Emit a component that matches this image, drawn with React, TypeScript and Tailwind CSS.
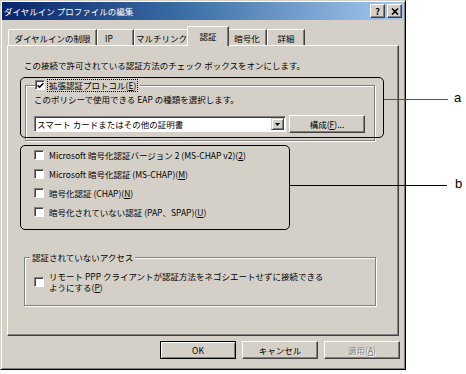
import { ReactNode } from "react";

const Check = ({ checked }: { checked?: boolean }) => (
  <span className="box-border flex h-[10px] w-[10px] shrink-0 items-center justify-center border border-t-[#808080] border-l-[#808080] border-r-white border-b-white bg-white shadow-[inset_1px_1px_#404040]">
    {checked && (
      <svg width="7" height="7" viewBox="0 0 7 7">
        <path d="M0.6 3.2 L2.6 5.2 L6.4 1.2" stroke="#000" strokeWidth="1.6" fill="none" />
      </svg>
    )}
  </span>
);

const Button = ({ children, def, disabled }: { children: ReactNode; def?: boolean; disabled?: boolean }) => (
  <div
    className={
      def
        ? "box-border flex h-[18px] w-[76px] items-center justify-center border border-black shadow-[inset_1px_1px_#fff,inset_-1px_-1px_#808080]"
        : "box-border flex h-[18px] w-[76px] items-center justify-center border border-t-white border-l-white border-r-[#404040] border-b-[#404040] shadow-[inset_-1px_-1px_#808080]"
    }
  >
    <span className={disabled ? "text-[#808080] [text-shadow:1px_1px_#fff]" : ""}>{children}</span>
  </div>
);

const Tab = ({ label, className }: { label: string; className: string }) => (
  <div
    className={`box-border flex h-[16px] items-start justify-center rounded-tl-[2px] border-t border-l border-r border-t-white border-l-white border-r-[#404040] pt-[2px] shadow-[inset_-1px_0_#808080] ${className}`}
  >
    {label}
  </div>
);

const Row = ({ children }: { children: ReactNode }) => (
  <div className="ml-[26px] flex h-[19px] items-center gap-[5px]">
    <Check />
    <span>{children}</span>
  </div>
);

export default function App() {
  return (
    <div className="relative h-[374px] w-[466px] overflow-hidden bg-white font-['Noto_Sans_CJK_JP','Noto_Sans',sans-serif] text-[8.5px] leading-[12px] text-black">
      <div className="box-border flex h-[370px] w-[406px] flex-col border border-t-[#d4d0c8] border-l-[#d4d0c8] border-r-black border-b-black bg-[#d4d0c8] p-[1px] shadow-[inset_1px_1px_#fff,inset_-1px_-1px_#808080]">
        {/* title bar */}
        <div className="flex h-[18px] items-center bg-[linear-gradient(to_right,#0a246a,#3a6ea5_45%,#a6caf0)] pl-[2px] pr-[2px] text-white">
          <span className="text-[8.5px]">ダイヤルイン プロファイルの編集</span>
          <div className="ml-auto flex gap-[2px]">
            <div className="box-border flex h-[14px] w-[15px] items-center justify-center border border-t-white border-l-white border-r-[#404040] border-b-[#404040] bg-[#d4d0c8] text-[9px] font-bold leading-none text-black shadow-[inset_-1px_-1px_#808080]">
              ?
            </div>
            <div className="box-border flex h-[14px] w-[15px] items-center justify-center border border-t-white border-l-white border-r-[#404040] border-b-[#404040] bg-[#d4d0c8] shadow-[inset_-1px_-1px_#808080]">
              <svg width="8" height="7" viewBox="0 0 8 7">
                <path d="M1 0.5 L7 6.5 M7 0.5 L1 6.5" stroke="#000" strokeWidth="1.6" />
              </svg>
            </div>
          </div>
        </div>

        {/* tabs */}
        <div className="ml-[5px] mt-[6px] flex h-[19px] items-end pl-[1px]">
          <Tab label="ダイヤルインの制限" className="w-[89px]" />
          <Tab label="IP" className="w-[37px] justify-start pl-[7px]" />
          <Tab label="マルチリンク" className="w-[55px]" />
          <div className="relative z-10 -mx-[2px] -mb-[1px] box-border flex h-[20px] w-[42px] items-start justify-center rounded-tl-[2px] border-t border-l border-r border-t-white border-l-white border-r-[#404040] bg-[#d4d0c8] pt-[3px] shadow-[inset_-1px_0_#808080]">
            認証
          </div>
          <Tab label="暗号化" className="w-[40px]" />
          <Tab label="詳細" className="w-[38px]" />
        </div>

        {/* panel */}
        <div className="ml-[5px] box-border flex h-[291px] w-[392px] flex-col border border-t-white border-l-white border-r-[#404040] border-b-[#404040] shadow-[inset_-1px_-1px_#808080]">
          <div className="ml-[16px] mt-[13px] h-[12px]">この接続で許可されている認証方法のチェック ボックスをオンにします。</div>

          {/* EAP group */}
          <div className="ml-[17px] mt-[14px] box-border flex h-[56px] w-[350px] flex-col border border-[#808080] shadow-[inset_1px_1px_#fff,1px_1px_#fff]">
            <div className="-mt-[7px] ml-[9px] flex h-[12px] w-fit items-center gap-[2px] bg-[#d4d0c8] pr-[2px]">
              <Check checked />
              <span className="box-border flex h-[13px] items-center border border-dotted border-black px-[1px]">
                拡張認証プロトコル(<u>E</u>)
              </span>
            </div>
            <div className="ml-[8px] mt-[2px] h-[12px]">このポリシーで使用できる EAP の種類を選択します。</div>
            <div className="ml-[8px] mt-[10px] flex items-center gap-[3px]">
              <div className="box-border flex h-[16px] w-[252px] items-center border border-t-[#808080] border-l-[#808080] border-r-white border-b-white bg-white shadow-[inset_1px_1px_#404040] pl-[2px] pr-[1px]">
                <span>スマート カードまたはその他の証明書</span>
                <div className="ml-auto box-border flex h-[12px] w-[13px] items-center justify-center border border-t-[#d4d0c8] border-l-[#d4d0c8] border-r-[#404040] border-b-[#404040] bg-[#d4d0c8] shadow-[inset_1px_1px_#fff,inset_-1px_-1px_#808080]">
                  <svg width="5" height="3" viewBox="0 0 5 3">
                    <path d="M0 0 H5 L2.5 3 Z" fill="#000" />
                  </svg>
                </div>
              </div>
              <Button>
                構成(<u>F</u>)...
              </Button>
            </div>
          </div>

          {/* methods */}
          <div className="mt-[4px] flex flex-col">
            <Row>
              Microsoft 暗号化認証バージョン 2 (MS-CHAP v2)(<u>2</u>)
            </Row>
            <Row>
              Microsoft 暗号化認証 (MS-CHAP)(<u>M</u>)
            </Row>
            <Row>
              暗号化認証 (CHAP)(<u>N</u>)
            </Row>
            <Row>
              暗号化されていない認証 (PAP、SPAP)(<u>U</u>)
            </Row>
          </div>

          {/* unauthenticated access */}
          <div className="ml-[16px] mt-[36px] box-border flex h-[49px] w-[352px] flex-col border border-[#808080] shadow-[inset_1px_1px_#fff,1px_1px_#fff]">
            <div className="-mt-[7px] ml-[5px] h-[12px] w-fit bg-[#d4d0c8] px-[2px]">認証されていないアクセス</div>
            <div className="ml-[9px] mt-[8px] flex items-center gap-[5px]">
              <Check />
              <div className="leading-[11px]">
                <div>リモート PPP クライアントが認証方法をネゴシエートせずに接続できる</div>
                <div>
                  ようにする(<u>P</u>)
                </div>
              </div>
            </div>
          </div>
        </div>

        {/* buttons */}
        <div className="mr-[4px] mt-[5px] flex justify-end gap-[6px]">
          <Button def>OK</Button>
          <Button>キャンセル</Button>
          <Button disabled>
            適用(<u>A</u>)
          </Button>
        </div>
      </div>

      {/* callouts */}
      <div className="absolute left-[20px] top-[77px] h-[61px] w-[364px] rounded-[5px] border border-black" />
      <div className="absolute left-[384px] top-[99px] h-px w-[64px] bg-[#555]" />
      <div className="absolute left-[454px] top-[91px] font-['Liberation_Sans',sans-serif] text-[13px] leading-[14px]">a</div>
      <div className="absolute left-[20px] top-[145px] h-[85px] w-[270px] rounded-[5px] border border-black" />
      <div className="absolute left-[290px] top-[185px] h-px w-[157px] bg-black" />
      <div className="absolute left-[455px] top-[177px] font-['Liberation_Sans',sans-serif] text-[13px] leading-[14px]">b</div>
    </div>
  );
}
